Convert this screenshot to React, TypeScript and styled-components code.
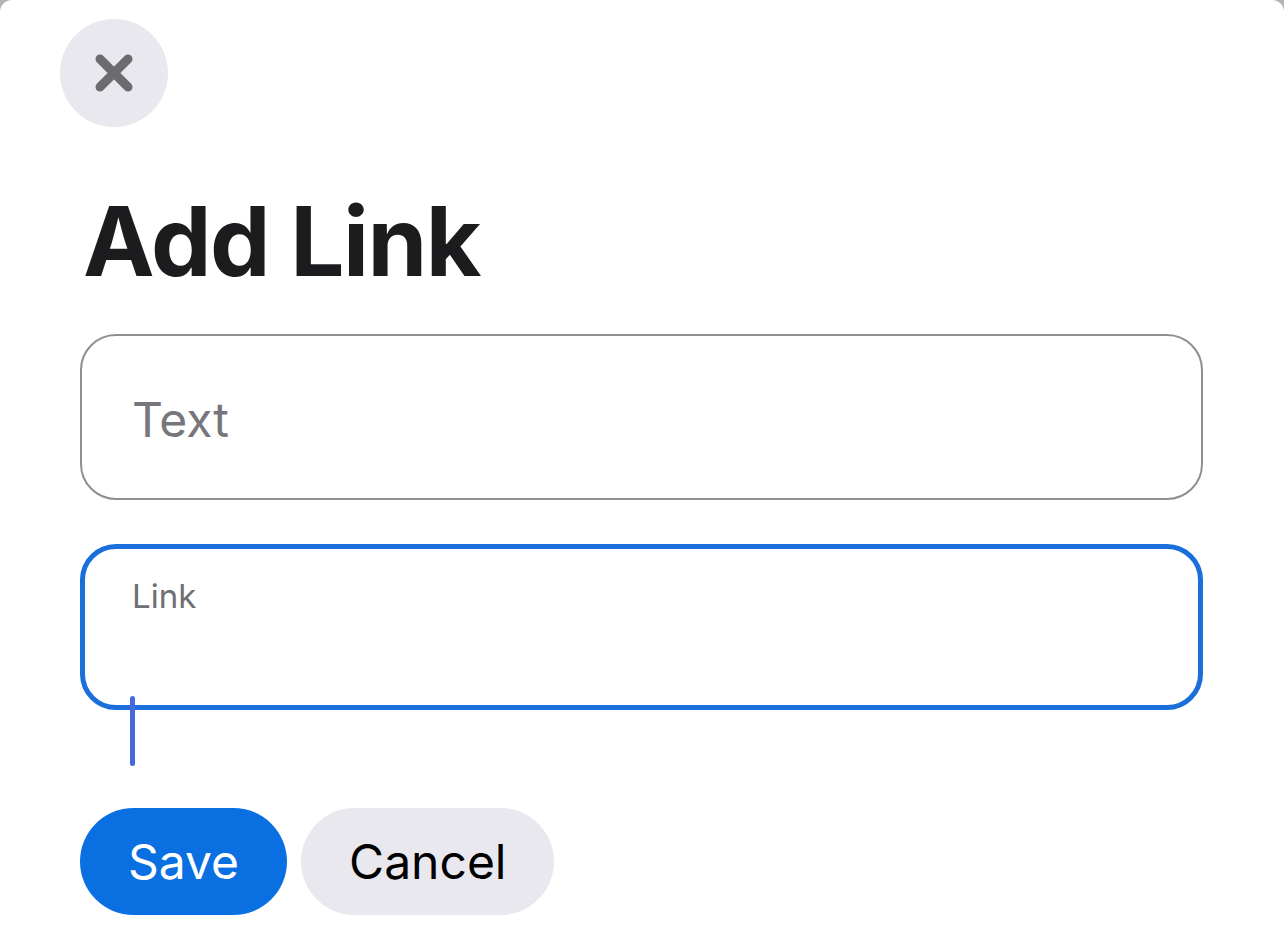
import styled, { createGlobalStyle } from "styled-components"

const GlobalStyle = createGlobalStyle`
  html, body {
    margin: 0;
    padding: 0;
    background: #b4b4b8;
  }
  * { box-sizing: border-box; }
`

const Sheet = styled.div`
  width: 1284px;
  height: 948px;
  background: #ffffff;
  border-radius: 12px 12px 0 0;
  padding: 19px 81px 0 80px;
  display: flex;
  flex-direction: column;
  font-family: Inter, "Noto Sans", "Liberation Sans", sans-serif;
  overflow: hidden;
`

const CloseButton = styled.button`
  width: 108px;
  height: 108px;
  margin-left: -20px;
  border: none;
  border-radius: 50%;
  background: #e8e8ee;
  display: flex;
  align-items: center;
  justify-content: center;
  padding: 0;
  cursor: pointer;
`

const Title = styled.h1`
  margin: 66px 0 0 3px;
  font-size: 96px;
  line-height: 1;
  font-weight: 700;
  color: #1c1c1e;
  letter-spacing: -1.5px;
`

const Field = styled.div<{ $focused?: boolean }>`
  position: relative;
  height: 166px;
  width: 100%;
  border: ${(p) => (p.$focused ? "5px solid #1a6fdb" : "2px solid #8e8e93")};
  border-radius: 36px;
  display: flex;
  flex-direction: column;
  justify-content: ${(p) => (p.$focused ? "flex-start" : "center")};
  padding: ${(p) => (p.$focused ? "28px 0 0 47px" : "5px 0 0 50px")};
`

const TextField = styled(Field)`
  margin-top: 45px;
`

const LinkField = styled(Field)`
  margin-top: 44px;
`

const Placeholder = styled.span`
  font-size: 48px;
  line-height: 1.2;
  color: #76767c;
`

const FloatingLabel = styled.span`
  font-size: 33px;
  line-height: 1.2;
  color: #6e6e73;
`

const Caret = styled.span`
  position: absolute;
  left: 45px;
  top: 147px;
  width: 5px;
  height: 70px;
  border-radius: 3px;
  background: #4668e0;
`

const Actions = styled.div`
  display: flex;
  gap: 14px;
  margin-top: 98px;
`

const PillButton = styled.button<{ $primary?: boolean }>`
  height: 107px;
  padding: 0 48px;
  border: none;
  border-radius: 54px;
  background: ${(p) => (p.$primary ? "#0a6fe0" : "#e8e8ee")};
  color: ${(p) => (p.$primary ? "#ffffff" : "#000000")};
  font-family: Inter, "Noto Sans", "Liberation Sans", sans-serif;
  font-size: 48px;
  font-weight: 400;
  cursor: pointer;
`

const CloseIcon = () => (
  <svg width="40" height="40" viewBox="0 0 40 40">
    <path
      d="M6 6 L34 34 M34 6 L6 34"
      stroke="#6c6c70"
      strokeWidth="9"
      strokeLinecap="round"
      fill="none"
    />
  </svg>
)

const App = () => {
  return (
    <>
      <GlobalStyle />
      <Sheet>
        <CloseButton aria-label="Close">
          <CloseIcon />
        </CloseButton>
        <Title>Add Link</Title>
        <TextField>
          <Placeholder>Text</Placeholder>
        </TextField>
        <LinkField $focused>
          <FloatingLabel>Link</FloatingLabel>
          <Caret />
        </LinkField>
        <Actions>
          <PillButton $primary>Save</PillButton>
          <PillButton>Cancel</PillButton>
        </Actions>
      </Sheet>
    </>
  )
}

export default App
